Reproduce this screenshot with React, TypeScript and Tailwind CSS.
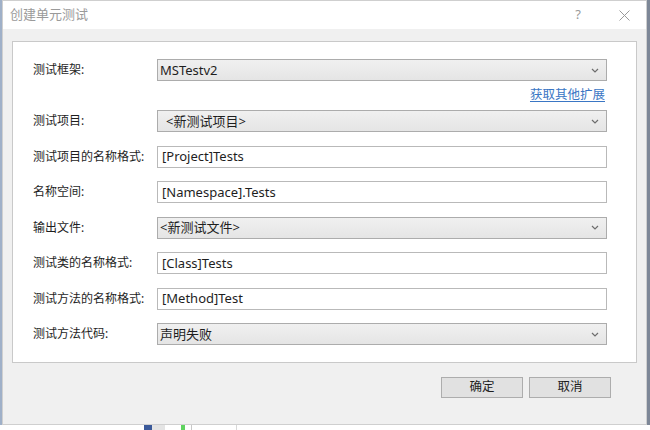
import { ReactNode } from "react";

const font = "font-['Noto_Sans','Noto_Sans_CJK_SC',sans-serif]";

type RowProps = { label: string; children: ReactNode };

const Row = ({ label, children }: RowProps) => (
  <div className="flex items-center h-[22px]">
    <div className="w-[124px] shrink-0 text-[12px] text-[#1e1e1e]">{label}</div>
    <div className="flex-1 h-full">{children}</div>
  </div>
);

const Chevron = () => (
  <svg width="8" height="5" viewBox="0 0 8 5" className="shrink-0">
    <path d="M1 1 L4 4 L7 1" fill="none" stroke="#6d6d6d" strokeWidth="1.2" />
  </svg>
);

const Combo = ({ value, indent }: { value: string; indent?: boolean }) => (
  <div
    className={
      "h-full flex items-center justify-between border border-[#acacac] bg-gradient-to-b from-[#f0f0f0] to-[#e5e5e5] pr-[7px] text-[13px] text-[#1e1e1e] " +
      (indent ? "pl-[8px]" : "pl-[2px]")
    }
  >
    <span className="leading-none">{value}</span>
    <Chevron />
  </div>
);

const TextBox = ({ value }: { value: string }) => (
  <div className="h-full flex items-center border border-[#b9b9b9] bg-white pl-[4px] text-[13px] text-[#1e1e1e]">
    <span className="leading-none">{value}</span>
  </div>
);

const Button = ({ children }: { children: ReactNode }) => (
  <div className="w-[82px] h-[21px] flex items-center justify-center border border-[#adadad] bg-[#e1e1e1] text-[12.5px] text-[#1e1e1e]">
    {children}
  </div>
);

export default function App() {
  return (
    <div className={"w-[650px] h-[430px] bg-white flex flex-col overflow-hidden " + font}>
      <div className="flex h-[425px]">
        <div className="w-[2px] bg-[#9fb0c8]" />
        <div className="w-[645px] flex flex-col border border-[#cfcfcf] bg-[#f0f0f0]">
          {/* title bar */}
          <div className="h-[28px] bg-white flex items-center pl-[7px] pr-[16px] text-[13px] text-[#9a9a9a]">
            <span>创建单元测试</span>
            <span className="ml-auto mr-[38px] text-[13px]">?</span>
            <svg width="11" height="11" viewBox="0 0 11 11">
              <path d="M0.5 0.5 L10.5 10.5 M10.5 0.5 L0.5 10.5" stroke="#9a9a9a" strokeWidth="1" />
            </svg>
          </div>

          <div className="px-[9px] pt-[12px]">
            <div className="h-[322px] border border-[#c9c9c9] bg-white pl-[20px] pr-[29px] pt-[17px]">
              <Row label="测试框架:">
                <Combo value="MSTestv2" />
              </Row>
              <div className="h-[29px] flex items-center justify-end pr-[2px]">
                <span className="text-[12.5px] text-[#3a76c4] underline underline-offset-2">获取其他扩展</span>
              </div>
              <div className="flex flex-col gap-[13.5px]">
                <Row label="测试项目:">
                  <Combo value="<新测试项目>" indent />
                </Row>
                <Row label="测试项目的名称格式:">
                  <TextBox value="[Project]Tests" />
                </Row>
                <Row label="名称空间:">
                  <TextBox value="[Namespace].Tests" />
                </Row>
                <Row label="输出文件:">
                  <Combo value="<新测试文件>" />
                </Row>
                <Row label="测试类的名称格式:">
                  <TextBox value="[Class]Tests" />
                </Row>
                <Row label="测试方法的名称格式:">
                  <TextBox value="[Method]Test" />
                </Row>
                <Row label="测试方法代码:">
                  <Combo value="声明失败" />
                </Row>
              </div>
            </div>
          </div>

          <div className="flex justify-end gap-[6px] pr-[35px] pt-[14px]">
            <Button>确定</Button>
            <Button>取消</Button>
          </div>
        </div>
        <div className="w-[3px] bg-[#7d8797]" />
      </div>

      {/* background behind the dialog */}
      <div className="flex h-[5px] items-stretch">
        <div className="w-[144px]" />
        <div className="w-[8px] bg-[#3b5a9a]" />
        <div className="w-[13px] bg-[#e4e4e4]" />
        <div className="w-[16px]" />
        <div className="w-[4px] bg-[#5fd35f]" />
        <div className="w-[6px]" />
        <div className="w-[1px] bg-[#c8c8c8]" />
        <div className="w-[44px]" />
        <div className="w-[1px] bg-[#d8d8d8]" />
      </div>
    </div>
  );
}
